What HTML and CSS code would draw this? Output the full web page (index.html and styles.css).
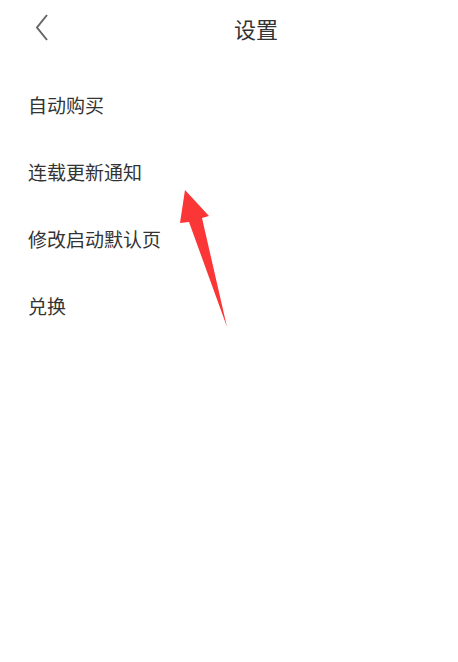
FILE: index.html
```html
<!DOCTYPE html>
<html lang="zh-CN">
<head>
    <meta charset="UTF-8">
    <meta name="viewport" content="width=device-width, initial-scale=1.0">
    <title>设置</title>
    <link rel="stylesheet" href="styles.css">
</head>
<body>
    <div class="header">
        <div class="back">
            <svg width="20" height="30" viewBox="0 0 20 30">
                <polyline points="15,2 5,14.5 15,27" fill="none" stroke="#666" stroke-width="2"/>
            </svg>
        </div>
        <div class="title">设置</div>
    </div>
    <div class="list">
        <div class="item">自动购买</div>
        <div class="item">连载更新通知</div>
        <div class="item">修改启动默认页</div>
        <div class="item">兑换</div>
    </div>

    <!-- annotation arrow drawn over the page -->
    <svg class="arrow" width="458" height="662" viewBox="0 0 458 662">
        <polygon points="185,190 209,216 202,218 227,327 189,222 180,223" fill="#fb3636"/>
    </svg>
</body>
</html>
```

FILE: styles.css
```css
body {
    margin: 0;
    background-color: #fff;
    font-family: "Noto Sans CJK SC", "Noto Sans", sans-serif;
    color: #333;
}
.header {
    display: flex;
    align-items: center;
    height: 56px;
}
.back {
    width: 54px;
    flex-shrink: 0;
    padding-left: 32px;
    box-sizing: border-box;
}
.back svg {
    display: block;
}
.title {
    flex: 1;
    text-align: center;
    font-size: 22px;
    line-height: 56px;
}
.list {
    padding-top: 15px;
}
.item {
    height: 67px;
    line-height: 67px;
    padding-left: 28px;
    font-size: 19px;
}
.arrow {
    position: absolute;
    top: 0;
    left: 0;
    pointer-events: none;
}
```
